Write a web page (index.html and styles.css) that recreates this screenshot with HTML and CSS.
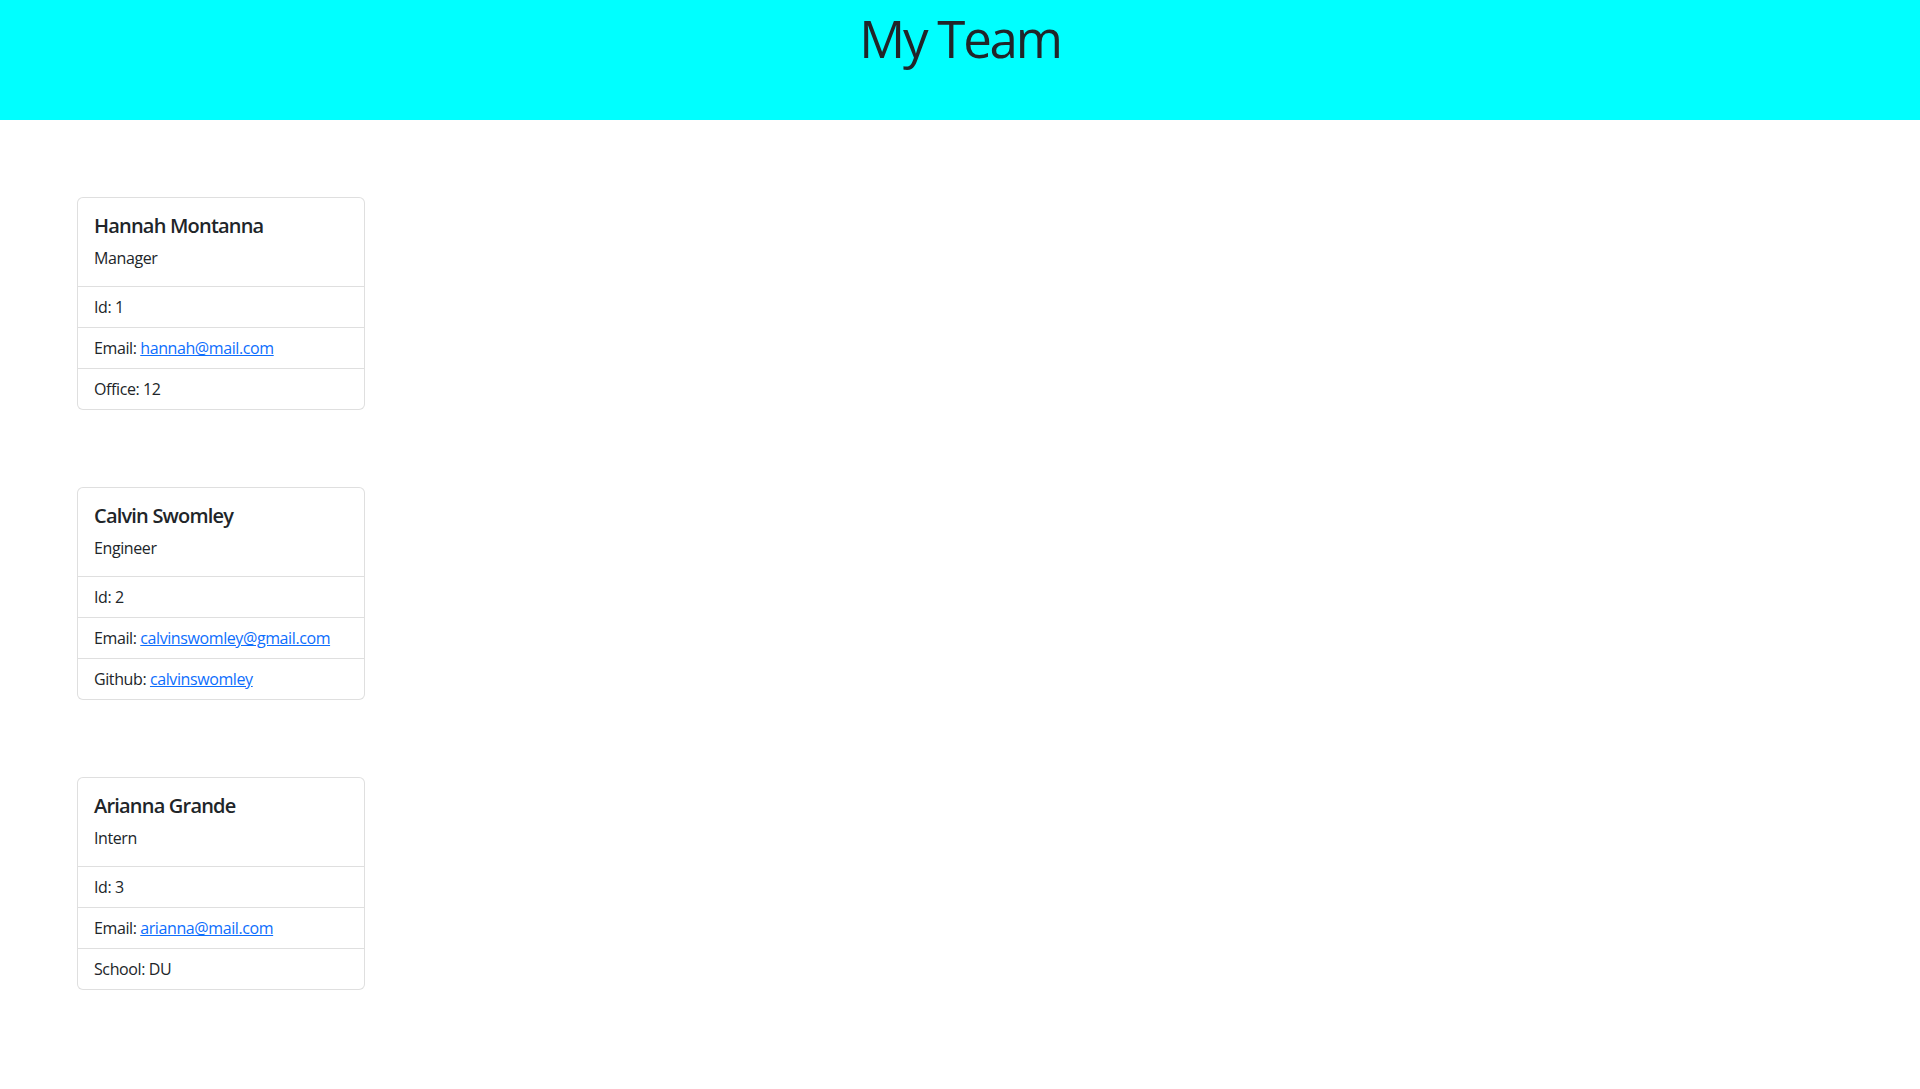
FILE: index.html
```html
<!DOCTYPE html>
<html lang="en">
<head>
<meta charset="utf-8">
<title>My Team</title>
<link rel="stylesheet" href="styles.css">
</head>
<body>
<header class="top">
  <h1 class="top-title">My Team</h1>
</header>
<main class="team">
  <section class="card">
    <div class="card-body">
      <h5 class="card-title">Hannah Montanna</h5>
      <p class="card-role">Manager</p>
    </div>
    <ul class="list">
      <li class="item">Id: 1</li>
      <li class="item">Email: <a class="link" href="#">hannah@mail.com</a></li>
      <li class="item">Office: 12</li>
    </ul>
  </section>
  <section class="card">
    <div class="card-body">
      <h5 class="card-title">Calvin Swomley</h5>
      <p class="card-role">Engineer</p>
    </div>
    <ul class="list">
      <li class="item">Id: 2</li>
      <li class="item">Email: <a class="link" href="#">calvinswomley@gmail.com</a></li>
      <li class="item">Github: <a class="link" href="#">calvinswomley</a></li>
    </ul>
  </section>
  <section class="card">
    <div class="card-body">
      <h5 class="card-title">Arianna Grande</h5>
      <p class="card-role">Intern</p>
    </div>
    <ul class="list">
      <li class="item">Id: 3</li>
      <li class="item">Email: <a class="link" href="#">arianna@mail.com</a></li>
      <li class="item">School: DU</li>
    </ul>
  </section>
</main>
</body>
</html>
```
FILE: styles.css
```css
* { box-sizing: border-box; }
body {
  margin: 0;
  font-family: "Open Sans", "Noto Sans", sans-serif;
  font-size: 16px;
  line-height: 1.5;
  letter-spacing: -0.4px;
  color: #212529;
  background: #fff;
}
.top {
  background: #00ffff;
  height: 120px;
  text-align: center;
}
.top-title {
  margin: 0;
  padding-top: 8px;
  font-size: 51px;
  font-weight: 400;
  line-height: 1.2;
  letter-spacing: -2.2px;
  color: #212529;
}
.team {
  display: flex;
  flex-direction: column;
  align-items: flex-start;
  gap: 77px;
  padding: 77px 0 60px 77px;
}
.card {
  width: 288px;
  border: 1px solid rgba(0, 0, 0, 0.125);
  border-radius: 6px;
  background: #fff;
}
.card-body {
  padding: 16px;
}
.card-title {
  margin: 0 0 8px;
  font-size: 20px;
  font-weight: 600;
  line-height: 1.2;
  letter-spacing: -0.8px;
}
.card-role {
  margin: 0;
}
.list {
  list-style: none;
  margin: 0;
  padding: 0;
}
.item {
  padding: 8px 16px;
  border-top: 1px solid rgba(0, 0, 0, 0.125);
}
.link {
  color: #0d6efd;
  text-decoration: underline;
}
```
